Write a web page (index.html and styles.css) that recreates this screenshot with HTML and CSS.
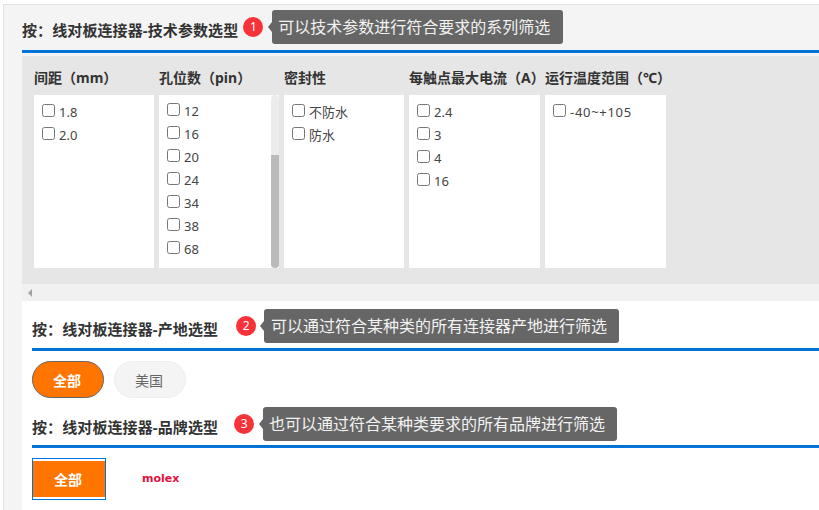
FILE: index.html
```html
<!DOCTYPE html>
<html lang="zh-CN">
<head>
<meta charset="utf-8">
<title>线对板连接器选型</title>
<link rel="stylesheet" href="styles.css">
</head>
<body>
<div class="page">
  <section class="tech">
    <div class="head head-1">
      <h3 class="title">按：线对板连接器-技术参数选型</h3>
      <span class="badge badge-1">1</span>
      <span class="tip tip-1">可以技术参数进行符合要求的系列筛选</span>
    </div>
    <div class="panel">
      <div class="col">
        <h4 class="col-title">间距（mm）</h4>
        <div class="list">
          <label class="opt"><input type="checkbox"><span>1.8</span></label>
          <label class="opt"><input type="checkbox"><span>2.0</span></label>
        </div>
      </div>
      <div class="col">
        <h4 class="col-title">孔位数（pin）</h4>
        <div class="list list-scroll">
          <label class="opt"><input type="checkbox"><span>12</span></label>
          <label class="opt"><input type="checkbox"><span>16</span></label>
          <label class="opt"><input type="checkbox"><span>20</span></label>
          <label class="opt"><input type="checkbox"><span>24</span></label>
          <label class="opt"><input type="checkbox"><span>34</span></label>
          <label class="opt"><input type="checkbox"><span>38</span></label>
          <label class="opt"><input type="checkbox"><span>68</span></label>
          <span class="vbar"><span class="vthumb"></span></span>
        </div>
      </div>
      <div class="col">
        <h4 class="col-title">密封性</h4>
        <div class="list">
          <label class="opt"><input type="checkbox"><span>不防水</span></label>
          <label class="opt"><input type="checkbox"><span>防水</span></label>
        </div>
      </div>
      <div class="col col-wide">
        <h4 class="col-title">每触点最大电流（A）</h4>
        <div class="list">
          <label class="opt"><input type="checkbox"><span>2.4</span></label>
          <label class="opt"><input type="checkbox"><span>3</span></label>
          <label class="opt"><input type="checkbox"><span>4</span></label>
          <label class="opt"><input type="checkbox"><span>16</span></label>
        </div>
      </div>
      <div class="col col-last">
        <h4 class="col-title">运行温度范围（℃）</h4>
        <div class="list">
          <label class="opt"><input type="checkbox"><span class="range">-40~+105</span></label>
        </div>
      </div>
    </div>
    <div class="hbar"><span class="harrow"></span></div>
  </section>

  <section class="lower">
    <div class="head head-2">
      <h3 class="title">按：线对板连接器-产地选型</h3>
      <span class="badge badge-2">2</span>
      <span class="tip tip-2">可以通过符合某种类的所有连接器产地进行筛选</span>
    </div>
    <div class="pills">
      <button class="pill pill-on">全部</button>
      <button class="pill">美国</button>
    </div>
    <div class="head head-3">
      <h3 class="title">按：线对板连接器-品牌选型</h3>
      <span class="badge badge-3">3</span>
      <span class="tip tip-3">也可以通过符合某种类要求的所有品牌进行筛选</span>
    </div>
    <div class="brands">
      <div class="brand-all"><span class="brand-fill">全部</span></div>
      <div class="molex">molex</div>
    </div>
  </section>
</div>
</body>
</html>
```
FILE: styles.css
```css
* { box-sizing: border-box; }
html, body {
  margin: 0;
  height: 510px;
  overflow: hidden;
  background: #fff;
  font-family: "Noto Sans", "Noto Sans CJK SC", sans-serif;
  color: #333;
}
.page {
  margin: 4px 0 0 3px;
  height: 506px;
  border-top: 1px solid #e2e2e2;
  border-left: 1px solid #e2e2e2;
  background: #f4f4f4;
  padding-left: 18px;
  overflow: hidden;
}
.head {
  display: flex;
  align-items: center;
  border-bottom: 3px solid #0073d9;
}
.head-1 { padding: 5px 0 6px; }
.head-2 { padding: 8px 0 5px; }
.head-3 { padding: 9px 0 4px; }
.title {
  margin: 6px 0 0;
  font-size: 15px;
  line-height: 20px;
  font-weight: 700;
  letter-spacing: 0.1px;
  color: #333;
  white-space: nowrap;
}
.badge {
  flex: none;
  width: 20px;
  height: 20px;
  border-radius: 50%;
  background: #f73239;
  color: #fff;
  font-size: 12px;
  line-height: 19px;
  text-align: center;
}
.badge-1 { margin-left: 5px; }
.badge-2 { margin-left: 18px; }
.badge-3 { margin-left: 16px; }
.tip {
  position: relative;
  flex: none;
  height: 34px;
  padding: 0 13px 0 6px;
  background: #666;
  border-radius: 3px;
  color: #f2f2f2;
  font-size: 16px;
  line-height: 34px;
  white-space: nowrap;
}
.tip::before {
  content: "";
  position: absolute;
  left: -4px;
  top: 12px;
  border-top: 5px solid transparent;
  border-bottom: 5px solid transparent;
  border-right: 4px solid #666;
}
.tip-1 { margin-left: 9px; }
.tip-2 { margin-left: 8px; padding: 0 12px 0 7px; }
.tip-3 { margin-left: 9px; padding: 0 12px 0 6px; }

.panel {
  display: flex;
  gap: 5px;
  height: 228px;
  margin-top: 3px;
  padding: 0 12px;
  background: #e6e6e6;
}
.col { flex: none; width: 120px; }
.col-wide { width: 131px; }
.col-last { width: 121px; }
.col-title {
  margin: 0;
  height: 39px;
  font-size: 14px;
  line-height: 44px;
  font-weight: 700;
  color: #333;
  white-space: nowrap;
}
.list {
  position: relative;
  height: 173px;
  padding-top: 5px;
  background: #fff;
}
.list-scroll { padding-top: 4px; }
.opt {
  display: flex;
  align-items: center;
  height: 23px;
  padding-left: 8px;
  font-size: 13px;
  color: #444;
}
.opt input {
  flex: none;
  width: 13px;
  height: 13px;
  margin: -2px 4px 0 0;
}
.range { letter-spacing: 0.7px; }
.vbar {
  position: absolute;
  top: 0;
  right: 0;
  width: 8px;
  height: 173px;
  border-radius: 4px;
  background: #ececec;
  padding-top: 60px;
}
.vthumb {
  display: block;
  height: 113px;
  border-radius: 0 0 4px 4px;
  background: #bbb;
}
.hbar {
  height: 17px;
  display: flex;
  align-items: center;
  padding-left: 6px;
  background: #f1f1f1;
}
.harrow {
  border-top: 4px solid transparent;
  border-bottom: 4px solid transparent;
  border-right: 4px solid #a3a3a3;
}
.lower {
  height: 209px;
  padding-left: 10px;
  background: #fff;
}
.pills {
  display: flex;
  gap: 10px;
  padding-top: 10px;
}
.pill {
  width: 72px;
  height: 37px;
  padding: 0 2px 0 0;
  border: 1px solid #eee;
  border-radius: 19px;
  background: #f4f4f4;
  color: #666;
  font: 14px "Noto Sans CJK SC", sans-serif;
}
.pill-on {
  background: #ff7500;
  border-color: #666;
  color: #fff;
  font-weight: 700;
}
.brands {
  display: flex;
  align-items: center;
  padding-top: 10px;
}
.brand-all {
  width: 74px;
  height: 42px;
  padding: 2px 0 1px;
  border: 1px solid #0073d9;
  background: #fff;
}
.brand-fill {
  display: block;
  height: 36px;
  padding-right: 2px;
  background: #ff7500;
  color: #fff;
  font-size: 14px;
  font-weight: 700;
  line-height: 38px;
  text-align: center;
}
.molex {
  margin-left: 36px;
  margin-top: -1px;
  font-family: "DejaVu Sans", sans-serif;
  font-size: 11px;
  font-weight: 700;
  color: #e3103f;
}
```
